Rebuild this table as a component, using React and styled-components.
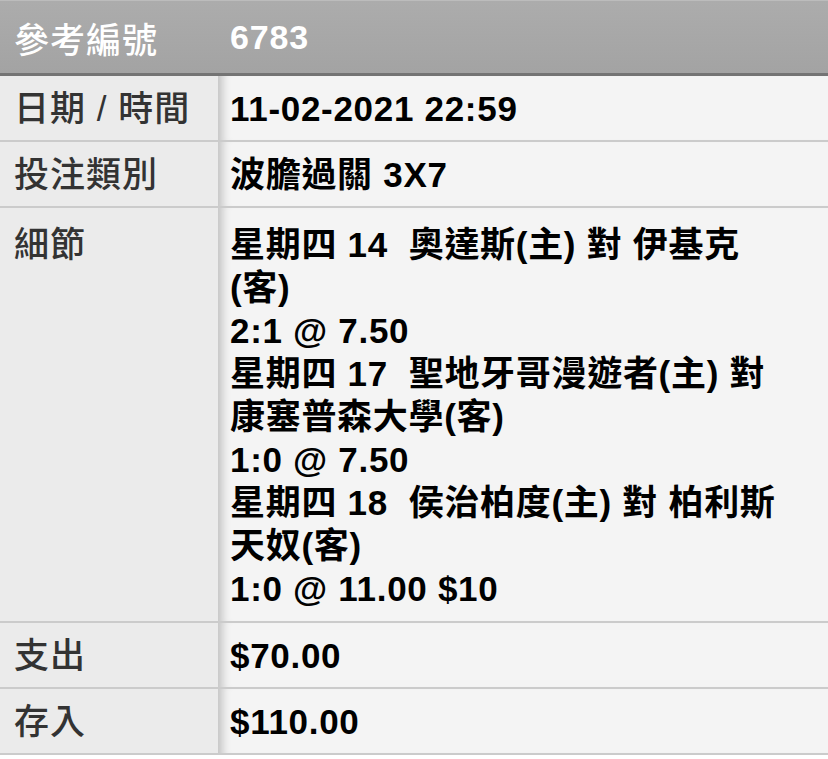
import React from 'react';
import styled, { createGlobalStyle } from 'styled-components';

const GlobalStyle = createGlobalStyle`
  html, body {
    margin: 0;
    padding: 0;
    background: #ffffff;
  }
  body {
    font-family: 'Liberation Sans', 'Noto Sans CJK TC', sans-serif;
  }
`;

const Sheet = styled.div`
  width: 828px;
  display: flex;
  flex-direction: column;
`;

const Header = styled.div`
  display: grid;
  grid-template-columns: 218px 1fr;
  height: 72px;
  align-items: center;
  background: linear-gradient(to bottom, #acacac 0%, #a3a3a3 100%);
  border-top: 1px solid #bcbcbc;
  border-bottom: 3px solid #747474;
  color: #ffffff;
  font-size: 35px;
`;

const HeaderLabel = styled.div`
  padding-left: 14px;
  font-weight: 500;
  letter-spacing: 1px;
`;

const HeaderValue = styled.div`
  padding-left: 12px;
  font-weight: 700;
  font-size: 34px;
  letter-spacing: 0.8px;
`;

const Row = styled.div`
  display: grid;
  grid-template-columns: 218px 1fr;
  border-bottom: 2px solid #cbcbcb;
`;

const Label = styled.div`
  background: #ebebeb;
  color: #333333;
  font-size: 35px;
  font-weight: 500;
  line-height: 43px;
  padding: ${(p) => (p.$tall ? '15px 0 11px 14px' : '11px 0 10px 14px')};
  letter-spacing: 1px;
`;

const Value = styled.div`
  background: #f4f4f4;
  box-shadow: inset 12px 0 10px -8px rgba(0, 0, 0, 0.22);
  color: #000000;
  font-size: 35px;
  font-weight: 700;
  line-height: 43px;
  letter-spacing: 0.7px;
  padding: ${(p) => (p.$tall ? '15px 0 11px 12px' : '11px 0 10px 12px')};
`;

const Line = styled.div`
  white-space: pre;
`;

const details = [
  '星期四 14  奧達斯(主) 對 伊基克',
  '(客)',
  '2:1 @ 7.50',
  '星期四 17  聖地牙哥漫遊者(主) 對',
  '康塞普森大學(客)',
  '1:0 @ 7.50',
  '星期四 18  侯治柏度(主) 對 柏利斯',
  '天奴(客)',
  '1:0 @ 11.00 $10',
];

const rows = [
  { label: '日期 / 時間', value: ['11-02-2021 22:59'] },
  { label: '投注類別', value: ['波膽過關 3X7'] },
  { label: '細節', value: details, tall: true },
  { label: '支出', value: ['$70.00'] },
  { label: '存入', value: ['$110.00'] },
];

export default function App() {
  return (
    <>
      <GlobalStyle />
      <Sheet>
        <Header>
          <HeaderLabel>參考編號</HeaderLabel>
          <HeaderValue>6783</HeaderValue>
        </Header>
        {rows.map((r) => (
          <Row key={r.label}>
            <Label $tall={r.tall}>{r.label}</Label>
            <Value $tall={r.tall}>
              {r.value.map((l, i) => (
                <Line key={i}>{l}</Line>
              ))}
            </Value>
          </Row>
        ))}
      </Sheet>
    </>
  );
}
